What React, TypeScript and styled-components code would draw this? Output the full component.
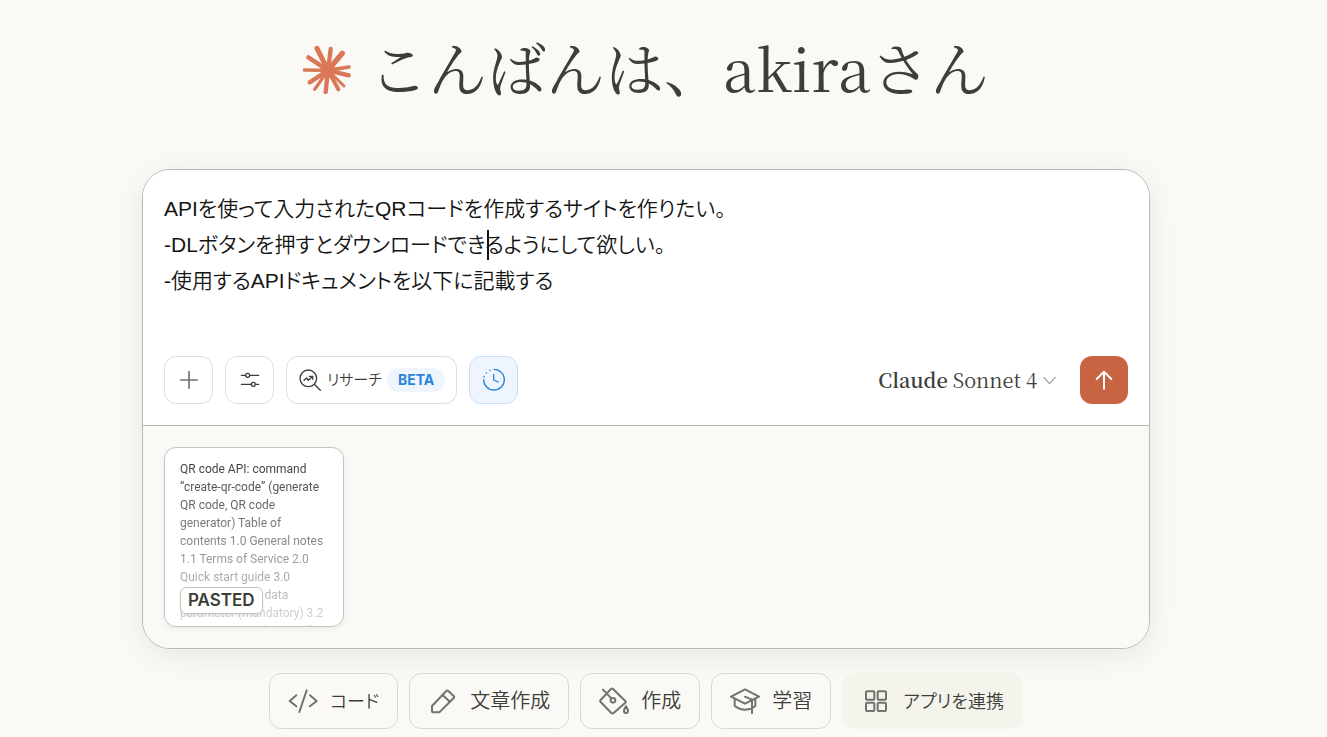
import React, { useState } from "react";
import styled, { createGlobalStyle } from "styled-components";

const sans = `Inter, "Noto Sans CJK JP", sans-serif`;
const serif = `"Noto Serif CJK JP", "Liberation Serif", serif`;

const GlobalStyle = createGlobalStyle`
  *, *::before, *::after { box-sizing: border-box; }
  body {
    margin: 0;
    background: #faf9f5;
    color: #3d3d3a;
    font-family: ${sans};
    font-feature-settings: "palt";
  }
  button, textarea { font: inherit; font-feature-settings: inherit; color: inherit; }
  button { cursor: pointer; }
`;

const Page = styled.main`
  display: flex;
  flex-direction: column;
  align-items: center;
  padding: 28px 35px 8px 0;
`;

const Greeting = styled.h1`
  display: flex;
  align-items: center;
  gap: 18px;
  margin: 0;
  height: 84px;
  font-family: ${serif};
  font-size: 59px;
  font-weight: 400;
  font-feature-settings: normal;
  line-height: 78px;
  white-space: nowrap;
`;

const GreetingText = styled.span`
  padding-bottom: 6px;
`;

const Composer = styled.form`
  width: 100%;
  max-width: 1008px;
  margin-top: 57px;
  border: 1px solid #b9b8b4;
  border-radius: 28px;
  overflow: hidden;
  box-shadow: 0 6px 30px rgba(0, 0, 0, 0.075);
`;

const Editor = styled.div`
  position: relative;
  padding: 21px;
  background: #fff;
`;

const Prompt = styled.textarea`
  display: block;
  width: 100%;
  height: 144px;
  padding: 0;
  border: 0;
  outline: 0;
  resize: none;
  background: transparent;
  color: #141413;
  font-family: "Liberation Sans", "Noto Sans CJK JP", sans-serif;
  font-size: 21px;
  font-weight: 350;
  line-height: 36px;
`;

const Caret = styled.span`
  position: absolute;
  left: 344px;
  top: 60px;
  width: 2px;
  height: 30px;
  background: #141413;
`;

const Toolbar = styled.div`
  display: flex;
  align-items: center;
  gap: 12px;
  margin-top: 21px;
`;

const ToolButton = styled.button<{ $active?: boolean; $wide?: boolean }>`
  display: flex;
  align-items: center;
  justify-content: center;
  gap: 5px;
  min-width: 49px;
  height: 48px;
  padding: ${(p) => (p.$wide ? "0 11px" : "0")};
  border: 1px solid ${(p) => (p.$active ? "#c5dff8" : "#dedddb")};
  border-radius: 12px;
  background: ${(p) => (p.$active ? "#eef5fd" : "#fff")};
  color: ${(p) => (p.$active ? "#2c84db" : "#3d3d3a")};
  font-size: 15px;
  font-weight: 350;
`;

const Label = styled.span`
  padding-bottom: 3px;
`;

const Beta = styled.span`
  padding: 0 11px;
  border-radius: 12px;
  background: #eef5fd;
  color: #2c84db;
  font-size: 14px;
  font-weight: 700;
  line-height: 24px;
`;

const ModelButton = styled.button`
  display: flex;
  align-items: center;
  gap: 6px;
  margin-left: auto;
  margin-right: 12px;
  padding: 0;
  border: 0;
  background: none;
  font-family: ${serif};
  font-size: 20px;
  line-height: 36px;

  b { font-weight: 600; }
  svg { color: #91908a; }
`;

const SendButton = styled.button`
  display: grid;
  place-items: center;
  width: 48px;
  height: 48px;
  padding: 0;
  border: 0;
  border-radius: 12px;
  background: #c96442;
  color: #fff;
`;

const Attachments = styled.div`
  display: flex;
  gap: 12px;
  padding: 21px;
  border-top: 1px solid #b9b8b4;
  background: #faf9f5;
`;

const PastedCard = styled.article`
  position: relative;
  width: 180px;
  height: 180px;
  padding: 12px 15px;
  border: 1px solid #c4c3bf;
  border-radius: 12px;
  overflow: hidden;
  background: #fff;
  box-shadow: 0 2px 6px rgba(0, 0, 0, 0.06);
`;

const Excerpt = styled.p`
  height: 166px;
  margin: 0;
  overflow: hidden;
  color: #3d3d3a;
  font-family: Roboto, sans-serif;
  font-size: 12px;
  line-height: 18px;
  white-space: pre;
  mask-image: linear-gradient(to bottom, #000, rgba(0, 0, 0, 0.2));
`;

const PastedLabel = styled.span`
  position: absolute;
  left: 15px;
  bottom: 12px;
  padding: 0 7px;
  border: 1px solid #c4c3bf;
  border-radius: 6px;
  background: rgba(255, 255, 255, 0.95);
  box-shadow: 0 2px 3px rgba(0, 0, 0, 0.08);
  font-size: 17px;
  font-weight: 600;
  line-height: 25px;
`;

const Suggestions = styled.nav`
  display: flex;
  flex-wrap: wrap;
  justify-content: center;
  gap: 11px;
  margin-top: 24px;
`;

const Chip = styled.button<{ $filled?: boolean; $kana?: boolean }>`
  display: flex;
  align-items: center;
  gap: 12px;
  height: 56px;
  padding: 0 18px;
  border: 1px solid ${(p) => (p.$filled ? "#f4f3ec" : "#d9d8d4")};
  border-radius: 12px;
  background: ${(p) => (p.$filled ? "#f4f3ec" : "transparent")};
  font-size: ${(p) => (p.$kana ? "18px" : "20px")};
  font-weight: 350;
  white-space: nowrap;

  svg { color: #73726c; }
`;

type IconProps = {
  box: string;
  width: number;
  height: number;
  stroke?: number;
  children: React.ReactNode;
};

const Icon = ({ box, width, height, stroke = 5, children }: IconProps) => (
  <svg
    viewBox={box}
    width={width}
    height={height}
    fill="none"
    stroke="currentColor"
    strokeWidth={stroke}
    strokeLinecap="round"
    strokeLinejoin="round"
    aria-hidden="true"
  >
    {children}
  </svg>
);

const rays = [
  [42, 7, 15],
  [83, 9, 13],
  [118, 22, 16],
  [138, 63, 11],
  [137, 88, 13],
  [123, 120, 9],
  [106, 130, 12],
  [68, 138, 13],
  [35, 130, 10],
  [20, 109, 13],
  [4, 72, 10],
  [16, 34, 13],
];

const Sunburst = () => (
  <svg viewBox="0 0 144 144" width="48" height="48" stroke="#d97757" strokeLinecap="round" aria-hidden="true">
    <circle cx="75" cy="73" r="23" fill="#d97757" stroke="none" />
    {rays.map(([x, y, w]) => (
      <line key={`${x}-${y}`} x1="75" y1="73" x2={x} y2={y} strokeWidth={w} />
    ))}
  </svg>
);

const suggestions = [
  {
    label: "コード",
    kana: true,
    icon: (
      <Icon box="87 78 90 90" width={30} height={30} stroke={6}>
        <path d="M112 106 92 123l20 16M143 91l-22 65M153 106l20 17-20 16" />
      </Icon>
    ),
  },
  {
    label: "文章作成",
    icon: (
      <Icon box="488 76 90 90" width={30} height={30} stroke={6}>
        <path d="M500 136 543 91q3-3 6 0l16 15q3 3 0 6l-43 43h-19q-3 0-3-3zM531 102l23 22" />
      </Icon>
    ),
  },
  {
    label: "作成",
    icon: (
      <Icon box="76 76 90 90" width={30} height={30} stroke={6}>
        <path d="M112 85q3-3 6 0l37 36q3 3 0 5l-35 31q-4 3-7 0L81 124q-3-3 0-6zM88 87l25 26M157 137q-6 8-6 14a6 6 0 0 0 12 0q0-6-6-14" />
        <circle cx="118" cy="119" r="7" />
      </Icon>
    ),
  },
  {
    label: "学習",
    icon: (
      <Icon box="474 80 90 90" width={30} height={30} stroke={6}>
        <path d="m477 112 42-22 42 22-42 21zM488 120v20q31 22 62 0v-20M519 112l21 9v41" />
      </Icon>
    ),
  },
  {
    label: "アプリを連携",
    filled: true,
    kana: true,
    icon: (
      <Icon box="123 138 90 90" width={30} height={30} stroke={6}>
        <rect x="138" y="154" width="25" height="25" rx="3" />
        <rect x="173" y="154" width="25" height="25" rx="3" />
        <rect x="138" y="188" width="25" height="25" rx="3" />
        <rect x="173" y="188" width="25" height="25" rx="3" />
      </Icon>
    ),
  },
];

const initialPrompt = `APIを使って入力されたQRコードを作成するサイトを作りたい。
-DLボタンを押すとダウンロードできるようにして欲しい。
-使用するAPIドキュメントを以下に記載する`;

const excerpt = `QR code API: command
“create-qr-code” (generate
QR code, QR code
generator) Table of
contents 1.0 General notes
1.1 Terms of Service 2.0
Quick start guide 3.0
Parameters 3.1 data
parameter (mandatory) 3.2
size parameter (optional)`;

export default function App() {
  const [prompt, setPrompt] = useState(initialPrompt);

  return (
    <Page lang="ja">
      <GlobalStyle />
      <Greeting>
        <Sunburst />
        <GreetingText>こんばんは、akiraさん</GreetingText>
      </Greeting>

      <Composer onSubmit={(e) => e.preventDefault()}>
        <Editor>
          <Prompt
            aria-label="メッセージ"
            spellCheck={false}
            value={prompt}
            onChange={(e) => setPrompt(e.target.value)}
          />
          <Caret aria-hidden="true" />
          <Toolbar>
            <ToolButton type="button" aria-label="追加">
              <Icon box="69 75 60 60" width={20} height={20}>
                <path d="M74 105h50M99 80v50" stroke="#73726c" />
              </Icon>
            </ToolButton>
            <ToolButton type="button" aria-label="設定">
              <Icon box="252 75 60 60" width={20} height={20} stroke={4}>
                <path d="M256 91h12M281 91h27M256 118h29M299 118h9" />
                <circle cx="275" cy="91" r="6" />
                <circle cx="292" cy="118" r="6" />
              </Icon>
            </ToolButton>
            <ToolButton type="button" $wide>
              <Icon box="427 69 72 72" width={24} height={24} stroke={4}>
                <circle cx="458" cy="100" r="25" />
                <path d="m476 118 18 18M445 106l8-7 5 7 12-11M461 94h10v9" />
              </Icon>
              <Label>リサーチ</Label>
              <Beta>BETA</Beta>
            </ToolButton>
            <ToolButton type="button" $active aria-label="履歴">
              <Icon box="978 69 72 72" width={24} height={24} stroke={4}>
                <path d="M1014 73a31 31 0 1 1-31 31M1013 88v17l14 6" />
                <path d="M984 95v0M991 84v0M1002 76v0" strokeWidth="5" />
              </Icon>
            </ToolButton>
            <ModelButton type="button" aria-haspopup="listbox">
              <span>
                <b>Claude</b> Sonnet 4
              </span>
              <Icon box="548 88 38 38" width={13} height={13} stroke={3}>
                <path d="m550 98 17 18 17-18" />
              </Icon>
            </ModelButton>
            <SendButton type="submit" aria-label="送信">
              <Icon box="702 75 60 60" width={20} height={20} stroke={6}>
                <path d="M732 131V80M710 102l22-22 22 22" />
              </Icon>
            </SendButton>
          </Toolbar>
        </Editor>
        <Attachments>
          <PastedCard>
            <Excerpt>{excerpt}</Excerpt>
            <PastedLabel>PASTED</PastedLabel>
          </PastedCard>
        </Attachments>
      </Composer>

      <Suggestions aria-label="提案">
        {suggestions.map((s) => (
          <Chip key={s.label} type="button" $filled={s.filled} $kana={s.kana}>
            {s.icon}
            <Label>{s.label}</Label>
          </Chip>
        ))}
      </Suggestions>
    </Page>
  );
}
